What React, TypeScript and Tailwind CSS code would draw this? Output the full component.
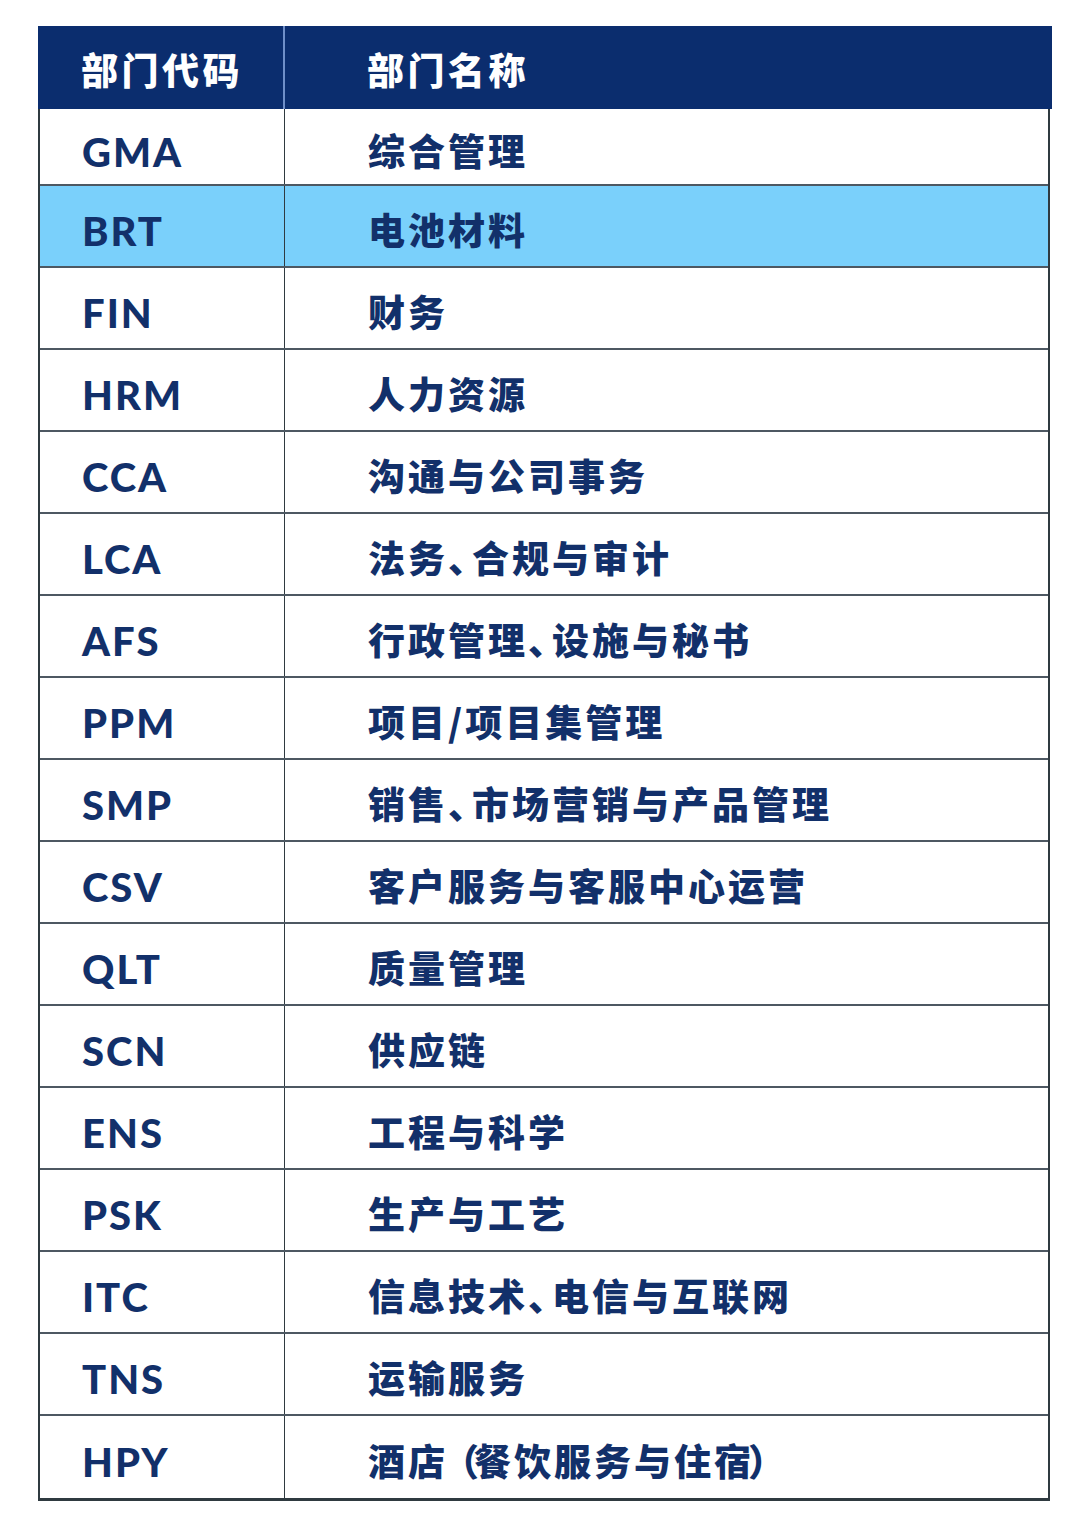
import React from "react";

const rows: [string, string][] = [
  ["GMA", "综合管理"],
  ["BRT", "电池材料"],
  ["FIN", "财务"],
  ["HRM", "人力资源"],
  ["CCA", "沟通与公司事务"],
  ["LCA", "法务、合规与审计"],
  ["AFS", "行政管理、设施与秘书"],
  ["PPM", "项目/项目集管理"],
  ["SMP", "销售、市场营销与产品管理"],
  ["CSV", "客户服务与客服中心运营"],
  ["QLT", "质量管理"],
  ["SCN", "供应链"],
  ["ENS", "工程与科学"],
  ["PSK", "生产与工艺"],
  ["ITC", "信息技术、电信与互联网"],
  ["TNS", "运输服务"],
  ["HPY", "酒店（餐饮服务与住宿）"],
];

const cjk = "font-['Noto_Sans_CJK_SC','Noto_Sans',sans-serif]";
const latin = "font-['Lato','Noto_Sans_CJK_SC',sans-serif]";

function Name({ text }: { text: string }) {
  const parts = Array.from(text);
  return (
    <>
      {parts.map((ch, i) => {
        const next = parts[i + 1];
        if (ch === "、") {
          return (
            <span key={i} className="tracking-[-13px]">
              {ch}
            </span>
          );
        }
        if (ch === "（") {
          return (
            <span key={i} className="tracking-[-5px]">
              {ch}
            </span>
          );
        }
        if (next === "（" || next === "）") {
          return (
            <span key={i} className="tracking-[-3px]">
              {ch}
            </span>
          );
        }
        return <span key={i}>{ch}</span>;
      })}
    </>
  );
}

export default function App() {
  return (
    <div className="w-[1080px] h-[1529px] bg-white pt-[26px] pl-[38px]">
      <div className="w-[1014px]">
        <div className="flex h-[83px] bg-[#0b2d6e] text-white">
          <div className={`w-[247px] border-r-2 border-[#6f8fc8] flex items-center pl-[43px] pt-[4px] text-[37px] font-black tracking-[3.5px] ${cjk}`}>
            部门代码
          </div>
          <div className={`flex-1 flex items-center pl-[82px] pt-[4px] text-[37px] font-black tracking-[3.5px] ${cjk}`}>
            部门名称
          </div>
        </div>
        <div className="w-[1012px] border-l-[2px] border-r-[2px] border-b-[3px] border-[#2f3a40]">
          {rows.map(([code, name], i) => (
            <div
              key={code}
              className={`flex ${i === 0 ? "h-[77px]" : "h-[82px]"} ${i === 1 ? "bg-[#7ad0fb]" : "bg-white"} ${i < rows.length - 1 ? "border-b-2 border-[#4d5862]" : ""}`}
            >
              <div className={`w-[245px] border-r-[1.5px] border-[#2f3a40] flex items-center pl-[42px] pt-[10px] text-[40px] font-black tracking-[2px] text-[#12306a] ${latin}`}>
                {code}
              </div>
              <div className={`flex-1 flex items-center pl-[83px] pt-[8px] text-[37px] font-black tracking-[3px] text-[#12306a] ${cjk}`}>
                <Name text={name} />
              </div>
            </div>
          ))}
        </div>
      </div>
    </div>
  );
}
